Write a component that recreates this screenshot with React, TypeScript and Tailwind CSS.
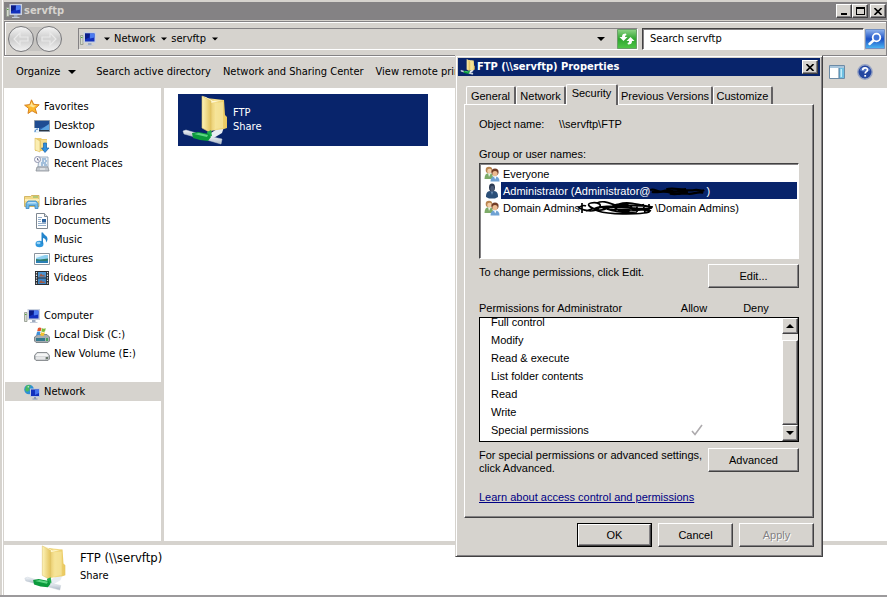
import { ReactNode, useState } from "react";
import clsx from "clsx";

type IconProps = {
  className?: string;
};

const FolderShareIcon = ({ className }: IconProps) => (
  <svg viewBox="0 0 48 50" className={className} aria-hidden="true">
    <defs>
      <linearGradient id="folderFront" x1="0" x2="1">
        <stop offset="0" stopColor="#fdf3b8" />
        <stop offset="1" stopColor="#e3c35c" />
      </linearGradient>
      <linearGradient id="folderBack" x1="0" x2="1">
        <stop offset="0" stopColor="#d9b54d" />
        <stop offset="0.4" stopColor="#f4df8e" />
        <stop offset="1" stopColor="#e9c75c" />
      </linearGradient>
      <linearGradient id="pipe" x1="0" y1="0" x2="0" y2="1">
        <stop offset="0" stopColor="#f4f7fb" />
        <stop offset="1" stopColor="#a9b5c3" />
      </linearGradient>
    </defs>
    <path d="M26 40 38 32h4l-2 6-10 6z" fill="#e8edf3" />
    <path d="M24 3 42 5l1 15 2 2v11l-3 1-14 2z" fill="url(#folderBack)" />
    <path d="M20 1 24 2l7 4 10-1-12 3z" fill="#fff8d2" />
    <path d="m33 8 8-1v26l-8 1z" fill="#f7e7a0" opacity="0.7" />
    <path d="m20 1 9 5v32l-9-5z" fill="url(#folderFront)" stroke="#dcbf66" strokeWidth="0.6" />
    <path d="m25 37 4-2 1 6-4 1z" fill="#1fae4e" />
    <path d="m1 36 3-1 10 3-1 4-11-3z" fill="url(#pipe)" stroke="#c6cfd8" strokeWidth="0.5" />
    <path d="m26 41 14 3-1 5-14-4z" fill="url(#pipe)" stroke="#c6cfd8" strokeWidth="0.5" />
    <path d="m10 38 6-1 11 2 2 3-3 4-8-1-7-2z" fill="#0b9a3c" />
    <path d="m12 39 5-1 9 2-1 2z" fill="#5cd683" />
  </svg>
);

const ComputerIcon = ({ className }: IconProps) => (
  <svg viewBox="0 0 16 16" className={className} aria-hidden="true">
    <path d="M.5 4.500h2.500v9H.5z" fill="#d7dccf" stroke="#8e968a" strokeWidth="0.8" />
    <path d="M1 6h1.500v1H1z" fill="#58a743" />
    <path d="M3.500 1H16v11H3.500z" fill="#c9d1df" />
    <path d="M5 2.500h9.500v8H5z" fill="#1230bd" />
    <path d="M5 2.500h5l-1 4-4 2z" fill="#0a1c86" />
    <path d="M10 2.500h4.500v4L10 7.500z" fill="#4b7bf0" />
    <path d="M8 12h3.500v2H8z" fill="#9eabc0" />
    <path d="M6 14h7.500v1H6z" fill="#c4ccd9" />
  </svg>
);

const StarIcon = ({ className }: IconProps) => (
  <svg viewBox="0 0 16 16" className={className} aria-hidden="true">
    <path
      d="m7.500.8 2.200 4.500 5.500.500-4 3.700 1.600 5L8 11.800l-4 2.700.8-5L.6 6.200 5.800 5.600z"
      fill="#fdb92e"
      stroke="#d27a18"
      strokeWidth="0.9"
    />
    <path d="m7.500 3 1.400 3.200 3.300.4-3 2L7 7.500 3.500 7l2.700-.6z" fill="#ffe69a" />
  </svg>
);

const DesktopIcon = ({ className }: IconProps) => (
  <svg viewBox="0 0 16 16" className={className} aria-hidden="true">
    <path d="M.5 2.500h15v11H.5z" fill="#2b62ad" stroke="#8b98a8" />
    <path d="M1 3h14v5L1 11z" fill="#1f4c92" />
    <path d="m6 12 9-6v6z" fill="#5ba2e0" />
    <path d="M1 12h14v1H1z" fill="#283646" />
    <path d="M0 10h5v5H0z" fill="#e6f2fb" />
    <path d="M1 14c0-2 1-3 3-3" stroke="#2a70c0" fill="none" />
  </svg>
);

const DownloadsIcon = ({ className }: IconProps) => (
  <svg viewBox="0 0 16 16" className={className} aria-hidden="true">
    <path d="M1 1h6l1 1h5v12H1z" fill="#eccb6c" />
    <path d="m1 1 5 3v11l-5-2z" fill="#fbeeb2" stroke="#d9b85c" strokeWidth="0.6" />
    <path d="M7 3h6v8H7z" fill="#f5dd91" />
    <path d="M9.500 6h3v5H15l-4 4.500L7.500 11h2z" fill="#2f8fe0" stroke="#1762ab" strokeWidth="0.7" />
  </svg>
);

const RecentIcon = ({ className }: IconProps) => (
  <svg viewBox="0 0 16 16" className={className} aria-hidden="true">
    <path d="M5 1h9v10H4z" fill="#eaf0f6" stroke="#8ba0b5" strokeWidth="0.8" />
    <path d="M8 3h4M8 5h2M11 5h2M7 7h5M7 9h2M10 9h3" stroke="#5a8dc0" />
    <path d="M3 11h11l1 4H2z" fill="#c4c9cf" stroke="#8a9097" strokeWidth="0.8" />
    <path d="M6 12.500h5v1H6z" fill="#f5f5f5" />
    <circle cx="3.500" cy="3.500" r="3" fill="#f7f7fb" stroke="#8e93ac" />
    <path d="M3.500 2v2H5" stroke="#555d86" fill="none" strokeWidth="0.8" />
  </svg>
);

const LibrariesIcon = ({ className }: IconProps) => (
  <svg viewBox="0 0 16 16" className={className} aria-hidden="true">
    <path d="M.5 2.500h6l1-1h7.500v11H.5z" fill="#f3d987" stroke="#c9a94e" strokeWidth="0.8" />
    <path d="M9 2.500h5v1H9z" fill="#72b868" />
    <path d="M1 5h14v2H1z" fill="#fbeeb8" />
    <path d="M2 14.500V9.500L4 7h8l2 2.500v5h-3v-3H5v3z" fill="#6fb8e8" stroke="#3a86c0" strokeWidth="0.8" />
    <path d="m3 9.500 1.500-1.500h7L13 9.500z" fill="#bfe3f8" />
  </svg>
);

const DocumentsIcon = ({ className }: IconProps) => (
  <svg viewBox="0 0 16 16" className={className} aria-hidden="true">
    <path d="M2.500.500h8l3 3v12h-11z" fill="#fff" stroke="#7e8790" />
    <path d="M10.500.500v3h3" fill="#dfe5ea" stroke="#7e8790" />
    <path d="M4 4.500h4M4 6.500h3M4 8.500h3M4 10.500h8M4 12.500h8" stroke="#93aeca" />
    <path d="M8 6h4v3.500H8z" fill="#2c639f" />
  </svg>
);

const MusicIcon = ({ className }: IconProps) => (
  <svg viewBox="0 0 16 16" className={className} aria-hidden="true">
    <ellipse cx="5.500" cy="12" rx="4" ry="3.300" fill="#2e97dd" />
    <ellipse cx="4.500" cy="11" rx="2" ry="1.200" fill="#9bd3f5" />
    <path d="M7.500.5H9c.5 2.500 4.500 3 4.500 6.500 0 1.500-.7 2.500-1.500 3.500.3-3-1-4-3-4.500V12H7.500z" fill="#2385cc" />
  </svg>
);

const PicturesIcon = ({ className }: IconProps) => (
  <svg viewBox="0 0 16 16" className={className} aria-hidden="true">
    <path d="M.5 2.500h15v11H.5z" fill="#fff" stroke="#8a949e" />
    <path d="M2 4h12v8H2z" fill="#8fd0f0" />
    <path d="m2 8 4 .5 8-1v3H2z" fill="#2e7d6d" />
    <path d="M2 10c4-1 8 1 12-.5V12H2z" fill="#2a7fb5" />
    <path d="M2 4h9L2 7z" fill="#e6f6fd" />
  </svg>
);

const VideosIcon = ({ className }: IconProps) => (
  <svg viewBox="0 0 16 16" className={className} aria-hidden="true">
    <path d="M1 1h14v14H1z" fill="#2a2d31" />
    <path d="M4 2h8v5.500H4z" fill="#4c93cf" />
    <path d="M4 8.500h8V14H4z" fill="#3c83c4" />
    <path d="m5 6.500 2-3 2 2 1-1 1 2z" fill="#a05a44" />
    <path d="m5 13 2-3 2 2 1-1 1 2z" fill="#a05a44" />
    <path d="M2.500 2v13M13.500 2v13" stroke="#e8e8e8" strokeWidth="1.200" strokeDasharray="1.300 1.300" />
  </svg>
);

const SystemDiskIcon = ({ className }: IconProps) => (
  <svg viewBox="0 0 16 16" className={className} aria-hidden="true">
    <path d="m2 9 2-1.500h9L15.500 10v4l-1.500 1.500H2L.5 14v-4z" fill="#a6adb2" stroke="#6b7378" strokeWidth="0.8" />
    <path d="M2 11h9v3H2z" fill="#35798e" />
    <path d="M12 11h2v3h-2z" fill="#4aa35a" />
    <path d="M4 1c1.500-1 2.500-.5 3.500 0L6.700 4.300c-1-.5-2-.6-3.500 0z" fill="#e8532a" />
    <path d="M8 1.300c1.500.7 2.500.5 3.800 0L11 4.600c-1.300.6-2.300.5-3.700 0z" fill="#7cb83c" />
    <path d="M3 5c1.500-.7 2.500-.5 3.500 0l-.8 3.300c-1-.5-2-.6-3.500 0z" fill="#3f8fd8" />
    <path d="M7 5.300c1.500.7 2.500.5 3.800 0L10 8.600c-1.300.6-2.300.5-3.700 0z" fill="#f7c22c" />
  </svg>
);

const DiskIcon = ({ className }: IconProps) => (
  <svg viewBox="0 0 16 16" className={className} aria-hidden="true">
    <path d="m.5 9.500 2.500-3h10l2.500 3v3.500L14 14.500H2L.5 13z" fill="#b9bdc0" stroke="#84898c" strokeWidth="0.9" />
    <path d="m1.500 9.500 2-2.200h9l2 2.200-1 .9h-11z" fill="#f5f6f6" />
    <path d="M2 11h9v2.500H2z" fill="#e6e7e8" />
    <path d="M12 11h2v2h-2z" fill="#6a786a" />
  </svg>
);

const NetworkIcon = ({ className }: IconProps) => (
  <svg viewBox="0 0 16 16" className={className} aria-hidden="true">
    <circle cx="5" cy="5.500" r="4.800" fill="#2d8fd6" />
    <path d="M2 2c2-1.500 4-1 5 0L5 4l1 2-3 2-2-2z" fill="#48b860" />
    <path d="m3 3 2-1v1.500z" fill="#d6f5e6" />
    <path d="M6 4.500h10V13H6z" fill="#b9c6de" />
    <path d="M7 5.500h8V12H7z" fill="#1230bd" />
    <path d="m11 5.500h4V9l-4 2z" fill="#4472ec" />
    <path d="M10 13h2v1.500h-2zM8.500 14.500h5v1h-5z" fill="#8898b5" />
  </svg>
);

const UsersIcon = ({ className }: IconProps) => (
  <svg viewBox="0 0 16 16" className={className} aria-hidden="true">
    <path d="M.5 13c0-4 1.500-6 4.500-6s4 2 4 6z" fill="#7dab68" />
    <path d="m4 7 1 4 2-4z" fill="#eef5ea" />
    <circle cx="5" cy="4" r="3.300" fill="#b98550" />
    <circle cx="5.500" cy="5" r="2.300" fill="#f3cda6" />
    <path d="M6.500 15.500c0-3.500 1.500-5 4.500-5s4.500 1.500 4.500 5z" fill="#6fa2d4" />
    <path d="m10 10.500 1.200 3 1.300-3z" fill="#fff" />
    <circle cx="11" cy="6" r="3.600" fill="#713c26" />
    <circle cx="11" cy="7.500" r="2.600" fill="#edbb91" />
  </svg>
);

const UserIcon = ({ className }: IconProps) => (
  <svg viewBox="0 0 16 16" className={className} aria-hidden="true">
    <path d="M2 14c0-4 1-5.500 4-6h4c3 .5 4 2 4 6l-3 1.500H5z" fill="#2b4f78" />
    <path d="m6.500 8 1.500 4 1.500-4z" fill="#6a8db3" />
    <ellipse cx="8" cy="4.500" rx="3" ry="4" fill="#2a3850" />
    <ellipse cx="8.300" cy="5.500" rx="2" ry="2.700" fill="#4a5a76" />
  </svg>
);

const RefreshIcon = ({ className }: IconProps) => (
  <svg viewBox="0 0 20 20" className={className} aria-hidden="true">
    <defs>
      <linearGradient id="refresh" x1="0" y1="0" x2="0" y2="1">
        <stop offset="0" stopColor="#8fd487" />
        <stop offset="0.5" stopColor="#2fa52f" />
        <stop offset="1" stopColor="#4fc748" />
      </linearGradient>
    </defs>
    <path d="M.5.500h19v19H.5z" fill="url(#refresh)" stroke="#6b9d6a" />
    <path d="M9 4.500c-3 0-4 1-4 3.500H2.500l4 4 4-4H8c0-1.500.5-1.500 1.500-2z" fill="#fff" />
    <path d="M11 15.500c3 0 4-1 4-3.500h2.500l-4-4-4 4H12c0 1.500-.5 1.500-1.500 2z" fill="#fff" />
  </svg>
);

const SearchIcon = ({ className }: IconProps) => (
  <svg viewBox="0 0 20 20" className={className} aria-hidden="true">
    <defs>
      <linearGradient id="search" x1="0" y1="0" x2="0" y2="1">
        <stop offset="0" stopColor="#8fb4ee" />
        <stop offset="0.5" stopColor="#1c50c4" />
        <stop offset="1" stopColor="#4cb8f4" />
      </linearGradient>
    </defs>
    <path d="M.5.500h19v19H.5z" fill="url(#search)" stroke="#7391c4" />
    <path d="m9 11-4.500 4" stroke="#fff" strokeWidth="2.500" strokeLinecap="round" />
    <circle cx="11.500" cy="8.500" r="3.800" fill="#3f74d8" stroke="#fff" strokeWidth="1.800" />
  </svg>
);

const PaneIcon = ({ className }: IconProps) => (
  <svg viewBox="0 0 16 16" className={className} aria-hidden="true">
    <path d="M.5 1.500h15v13H.5z" fill="#fff" stroke="#6d8ba6" />
    <path d="M1 2h14v2H1z" fill="#a9c6dc" />
    <path d="M10 4h5v10h-5z" fill="#6fc0e2" />
    <path d="M10 4v10" stroke="#4d7294" />
    <path d="M11.500 5h1.500v8h-1.500z" fill="#c4ecf8" />
  </svg>
);

const HelpIcon = ({ className }: IconProps) => (
  <svg viewBox="0 0 16 16" className={className} aria-hidden="true">
    <circle cx="8" cy="8" r="7.200" fill="#2446a0" stroke="#9aa6c4" strokeWidth="1.400" />
    <path d="M2.500 6a6 5 0 0 1 11 0c-3 2-8 2-11 0z" fill="#7295dd" opacity="0.6" />
    <path d="M5.700 6.200c0-3 4.800-3 4.800-.3 0 1.800-2.300 1.800-2.300 3.600" fill="none" stroke="#fff" strokeWidth="1.700" />
    <path d="M7.300 11h1.800v1.700H7.300z" fill="#fff" />
  </svg>
);

const NavArrows = () => (
  <div className="relative flex h-7 w-[54px] items-center justify-between">
    <div className="absolute inset-x-3 inset-y-[2px] bg-[#c6c4c1]" />
    {["Back", "Forward"].map((label) => (
      <button
        key={label}
        aria-label={label}
        className="relative size-[26px] rounded-full border border-[#77777a] bg-linear-to-b from-[#f4f4f4] via-[#cbcbcb] to-[#f2f2f2]"
      >
        <svg viewBox="0 0 24 24" className={clsx("size-6", label === "Forward" && "rotate-180")}>
          <path
            d="m11 6-6 6 6 6v-4h8v-4h-8z"
            fill="#d4d4d4"
            stroke="#e9e9e9"
            strokeWidth="1.200"
          />
        </svg>
      </button>
    ))}
  </div>
);

const Caret = ({ className }: IconProps) => (
  <svg viewBox="0 0 8 4" className={clsx("h-1 shrink-0", className)} aria-hidden="true">
    <path d="M0 0h8L4 4z" fill="#000" />
  </svg>
);

const CloseGlyph = () => (
  <svg viewBox="0 0 8 7" className="h-[7px] w-2" aria-hidden="true">
    <path d="m.5 0 7 7M7.500 0l-7 7" stroke="#000" strokeWidth="1.600" />
  </svg>
);

type BevelButtonProps = {
  children: ReactNode;
  className?: string;
  label?: string;
  disabled?: boolean;
};

const BevelButton = ({ children, className, label, disabled }: BevelButtonProps) => (
  <button
    aria-label={label}
    disabled={disabled}
    className={clsx(
      "flex shrink-0 items-center justify-center border border-t-white border-l-white border-r-[#424142] border-b-[#424142] bg-[#d6d3ce] shadow-[inset_-1px_-1px_#848284]",
      className
    )}
  >
    {children}
  </button>
);

const groups = [
  {
    name: "Favorites",
    Icon: StarIcon,
    items: [
      { name: "Desktop", Icon: DesktopIcon },
      { name: "Downloads", Icon: DownloadsIcon },
      { name: "Recent Places", Icon: RecentIcon },
    ],
  },
  {
    name: "Libraries",
    Icon: LibrariesIcon,
    items: [
      { name: "Documents", Icon: DocumentsIcon },
      { name: "Music", Icon: MusicIcon },
      { name: "Pictures", Icon: PicturesIcon },
      { name: "Videos", Icon: VideosIcon },
    ],
  },
  {
    name: "Computer",
    Icon: ComputerIcon,
    items: [
      { name: "Local Disk (C:)", Icon: SystemDiskIcon },
      { name: "New Volume (E:)", Icon: DiskIcon },
    ],
  },
  { name: "Network", Icon: NetworkIcon, items: [] },
];

const Sidebar = () => (
  <nav className="w-[160px] shrink-0 overflow-hidden border-r-3 border-[#d6d3ce] pt-[9px]">
    <ul className="flex flex-col gap-[19px]">
      {groups.map(({ name, Icon, items }) => (
        <li key={name}>
          <a
            href="#"
            className={clsx(
              "ml-px flex h-[19px] items-center gap-1 pl-[19px]",
              name === "Network" && "bg-[#d6d3ce]"
            )}
          >
            <Icon className="size-4" />
            {name}
          </a>
          {items.map((item) => (
            <a key={item.name} href="#" className="flex h-[19px] items-center gap-1 pl-[30px]">
              <item.Icon className="size-4" />
              {item.name}
            </a>
          ))}
        </li>
      ))}
    </ul>
  </nav>
);

const tabs = [
  { name: "General", width: "w-[50px]" },
  { name: "Network", width: "w-[50px]" },
  { name: "Security", width: "w-[52px]" },
  { name: "Previous Versions", width: "w-[95px]" },
  { name: "Customize", width: "w-[60px]" },
];

const permissions = [
  { name: "Full control", allow: false },
  { name: "Modify", allow: false },
  { name: "Read & execute", allow: false },
  { name: "List folder contents", allow: false },
  { name: "Read", allow: false },
  { name: "Write", allow: false },
  { name: "Special permissions", allow: true },
];

const principals = [
  {
    id: "everyone",
    Icon: UsersIcon,
    text: "Everyone",
  },
  {
    id: "administrator",
    Icon: UserIcon,
    text: (
      <>
        Administrator (Administrator@
        <svg viewBox="0 0 62 14" className="h-[14px] w-[56px]" aria-hidden="true">
          <path
            d="M0 6c5-3 9 4 15 1s10 2 16 0 12 0 18-1 8 2 11 0M2 8c8 1 14-2 21 1s13 0 19 1 10-3 17-1M18 5c8-2 16 1 22 0M22 10c9 2 14-2 22 0M24 8c6-2 12 1 18 0"
            fill="none"
            stroke="#000"
            strokeWidth="2.400"
          />
        </svg>
        )
      </>
    ),
  },
  {
    id: "domain-admins",
    Icon: UsersIcon,
    text: (
      <>
        Domain Admins
        <svg viewBox="0 0 78 16" className="-ml-[3px] h-4 w-[78px]" aria-hidden="true">
          <path
            d="M1 8c4-3 6-3 8-2M5 3v10M2 8c8 4 16 4 20 0s-2-6-8-5 0 6 8 7 14-7 24-6 12 6 4 7-18-4-8-7 20 1 34 3M20 3c6-3 12 0 18 2s20-1 36 2M9 11c14-6 34-4 50-2s16 3 8 4-34 2-46-2 12-6 28-4 22 2 26 1M24 7c8 4 20 2 30 3s14-2 20 1M60 5v7M66 4l2 8M72 4v8M30 9c8 3 18 4 30 3"
            fill="none"
            stroke="#000"
            strokeWidth="1.700"
          />
        </svg>
        \Domain Admins)
      </>
    ),
  },
];

const ScrollBar = () => (
  <div className="flex w-4 shrink-0 flex-col">
    <BevelButton label="Scroll up" className="h-4">
      <Caret className="w-2 rotate-180" />
    </BevelButton>
    <div className="flex flex-1 flex-col bg-[#ebe9e6] pt-[6px]">
      <div className="flex-1 border border-t-white border-l-white border-r-[#424142] border-b-[#424142] bg-[#d6d3ce] shadow-[inset_-1px_-1px_#848284]" />
    </div>
    <BevelButton label="Scroll down" className="h-4">
      <Caret className="w-2" />
    </BevelButton>
  </div>
);

const PropertiesDialog = () => {
  const [tab, setTab] = useState("Security");
  const [selected, setSelected] = useState("administrator");

  return (
    <div
      role="dialog"
      aria-labelledby="dialog-title"
      className="absolute top-[55px] left-[455px] w-[368px] border border-t-[#d6d3ce] border-l-[#d6d3ce] border-r-[#424142] border-b-[#424142] bg-[#d6d3ce] pb-[9px] font-['Liberation_Sans',sans-serif] text-[11px] leading-4 shadow-[inset_1px_1px_#fff,inset_-1px_-1px_#848284]"
    >
      <div className="mx-[2px] mt-[2px] flex h-[18px] items-center gap-px bg-[#08246b] pr-[2px] pl-[2px] text-white">
        <FolderShareIcon className="size-4" />
        <h2 id="dialog-title" className="flex-1 font-['DejaVu_Sans_Condensed','DejaVu_Sans',sans-serif] font-bold">
          FTP (\\servftp) Properties
        </h2>
        <BevelButton label="Close" className="h-[14px] w-4">
          <CloseGlyph />
        </BevelButton>
      </div>

      <div className="mr-2 ml-2 pt-2">
        <div role="tablist" className="flex items-end pl-[2px]">
          {tabs.map(({ name, width }) => (
            <button
              key={name}
              role="tab"
              aria-selected={tab === name}
              onClick={() => setTab(name)}
              className={clsx(
                "shrink-0 rounded-t-[2px] border-t border-l border-t-white border-l-white border-r-2 border-r-[#636163] bg-[#d6d3ce] whitespace-nowrap",
                width,
                tab === name ? "relative -mb-px h-[21px] pb-1" : "h-[18px]"
              )}
            >
              {name}
            </button>
          ))}
        </div>

        <div className="border border-t-white border-l-white border-r-[#424142] border-b-[#424142] px-[14px] pt-[11px] pb-3 shadow-[inset_-1px_-1px_#848284]">
          <div className="flex">
            <span className="w-20">Object name:</span>
            <span>\\servftp\FTP</span>
          </div>

          <div id="principals-label" className="mt-[14px]">Group or user names:</div>
          <ul
            aria-labelledby="principals-label"
            className="mt-px h-24 border border-t-[#424142] border-l-[#424142] border-r-white border-b-white bg-white pt-px shadow-[inset_1px_1px_#848284]"
          >
            {principals.map(({ id, Icon, text }) => (
              <li key={id}>
                <button
                  onClick={() => setSelected(id)}
                  className="flex h-[17px] w-full items-center gap-px pr-px pl-1"
                >
                  <Icon className="size-4" />
                  <span
                    className={clsx(
                      "flex h-full flex-1 items-center pl-[2px] whitespace-nowrap",
                      selected === id && "bg-[#08246b] text-white"
                    )}
                  >
                    {text}
                  </span>
                </button>
              </li>
            ))}
          </ul>

          <div className="mt-[5px] flex justify-between">
            <p>To change permissions, click Edit.</p>
            <BevelButton className="h-6 w-[91px]">Edit...</BevelButton>
          </div>

          <div className="mt-3 flex pr-3">
            <span id="permissions-label" className="flex-1">Permissions for Administrator</span>
            <span className="w-[62px] text-center">Allow</span>
            <span className="w-[62px] text-center">Deny</span>
          </div>
          <div className="mt-px flex h-[125px] overflow-hidden border border-black bg-white">
            <div className="flex flex-1 flex-col justify-end overflow-hidden pb-[2px]">
              <table aria-labelledby="permissions-label" className="w-full shrink-0">
                <tbody>
                  {permissions.map(({ name, allow }) => (
                    <tr key={name} className="h-[18px]">
                      <th scope="row" className="p-0 pl-[11px] text-left font-normal">{name}</th>
                      <td className="w-[62px] p-0">
                        {allow && (
                          <svg viewBox="0 0 12 12" className="mx-auto size-3" role="img" aria-label="Allowed">
                            <path d="m1 7 3 3.500L11 1" fill="none" stroke="#adaaad" strokeWidth="1.600" />
                          </svg>
                        )}
                      </td>
                      <td className="w-[54px] p-0" />
                    </tr>
                  ))}
                </tbody>
              </table>
            </div>
            <ScrollBar />
          </div>

          <div className="mt-[6px] flex justify-between">
            <p className="pt-px leading-[13px]">
              For special permissions or advanced settings,
              <br />
              click Advanced.
            </p>
            <BevelButton className="h-6 w-[91px]">Advanced</BevelButton>
          </div>

          <a href="#" className="mt-[14px] block text-[#000084] underline">
            Learn about access control and permissions
          </a>
        </div>

        <div className="mt-[5px] flex justify-end gap-[6px]">
          <div className="border border-black">
            <BevelButton className="h-[22px] w-[73px]">OK</BevelButton>
          </div>
          <BevelButton className="h-6 w-[75px]">Cancel</BevelButton>
          <BevelButton disabled className="h-6 w-[75px] text-[#848284] text-shadow-[1px_1px_#fff]">
            Apply
          </BevelButton>
        </div>
      </div>
    </div>
  );
};

const App = () => {
  return (
    <div className="relative flex h-screen flex-col overflow-hidden border-b-2 border-[#9c9a9c] bg-[#d6d3ce] pt-[2px] pl-1 font-['DejaVu_Sans_Condensed','DejaVu_Sans',sans-serif] text-[11px] leading-4 text-black shadow-[inset_2px_0_#d6d3ce,inset_3px_0_#fff]">
      <header className="flex h-[18px] shrink-0 items-center gap-[2px] bg-[#848284] pr-px pl-[2px]">
        <ComputerIcon className="size-4" />
        <h1 className="flex-1 font-bold text-[#d6d3ce]">servftp</h1>
        <div className="flex">
          <BevelButton label="Minimize" className="h-[14px] w-4">
            <span className="mt-[6px] h-[2px] w-[6px] bg-black" />
          </BevelButton>
          <BevelButton label="Maximize" className="h-[14px] w-4">
            <span className="h-2 w-[9px] border border-t-2 border-black" />
          </BevelButton>
          <BevelButton label="Close" className="ml-[2px] h-[14px] w-4">
            <CloseGlyph />
          </BevelButton>
        </div>
      </header>

      <div className="mt-px flex h-[35px] shrink-0 items-center gap-1 border border-[#848284] pr-px pl-[3px] shadow-[inset_1px_1px_#fff,0_1px_#fff]">
        <NavArrows />
        <div className="ml-3 flex h-[22px] flex-1 items-center border border-t-[#848284] border-l-[#848284] border-r-white border-b-white pl-px">
          <ComputerIcon className="size-4" />
          <Caret className="ml-2 w-[6px]" />
          <button className="ml-1 flex items-center gap-[6px]">
            Network
            <Caret className="w-[6px]" />
          </button>
          <button className="ml-1 flex items-center gap-[6px]">
            servftp
            <Caret className="w-[6px]" />
          </button>
          <button aria-label="Previous locations" className="mr-2 ml-auto p-1">
            <Caret className="w-2" />
          </button>
          <button aria-label="Refresh">
            <RefreshIcon className="size-5" />
          </button>
        </div>
        <input
          type="search"
          aria-label="Search servftp"
          placeholder="Search servftp"
          className="h-[22px] w-[222px] border border-t-[#424142] border-l-[#424142] border-r-white border-b-white bg-white px-[7px] shadow-[inset_1px_1px_#848284] outline-none placeholder:text-black"
        />
        <button aria-label="Search" className="-ml-[3px]">
          <SearchIcon className="size-5" />
        </button>
      </div>

      <div className="flex h-8 shrink-0 items-center pr-[14px] pl-3 whitespace-nowrap">
        <button className="mr-5 flex items-center gap-2">
          Organize
          <Caret className="w-2" />
        </button>
        <div className="flex flex-1 gap-3">
          <button>Search active directory</button>
          <button>Network and Sharing Center</button>
          <button>View remote printers</button>
        </div>
        <div className="flex gap-3">
          <button aria-label="Show the preview pane">
            <PaneIcon className="size-4" />
          </button>
          <button aria-label="Help">
            <HelpIcon className="size-4" />
          </button>
        </div>
      </div>

      <div className="flex min-h-0 flex-1 bg-white">
        <Sidebar />
        <main className="flex-1 pt-[6px] pl-[14px]">
          <button className="flex h-[52px] w-[250px] items-center gap-[3px] bg-[#08246b] pl-1 text-left leading-[14px] text-white">
            <FolderShareIcon className="h-[50px] w-12" />
            <span>
              FTP
              <br />
              Share
            </span>
          </button>
        </main>
      </div>

      <footer className="flex h-[54px] shrink-0 items-start gap-[10px] border-t-4 border-[#d6d3ce] bg-white pl-[18px]">
        <FolderShareIcon className="h-[46px] w-12" />
        <div className="pt-1">
          <div className="text-[13px] leading-[18px]">FTP (\\servftp)</div>
          <div className="leading-[18px]">Share</div>
        </div>
      </footer>

      <PropertiesDialog />
    </div>
  );
};

export default App;
